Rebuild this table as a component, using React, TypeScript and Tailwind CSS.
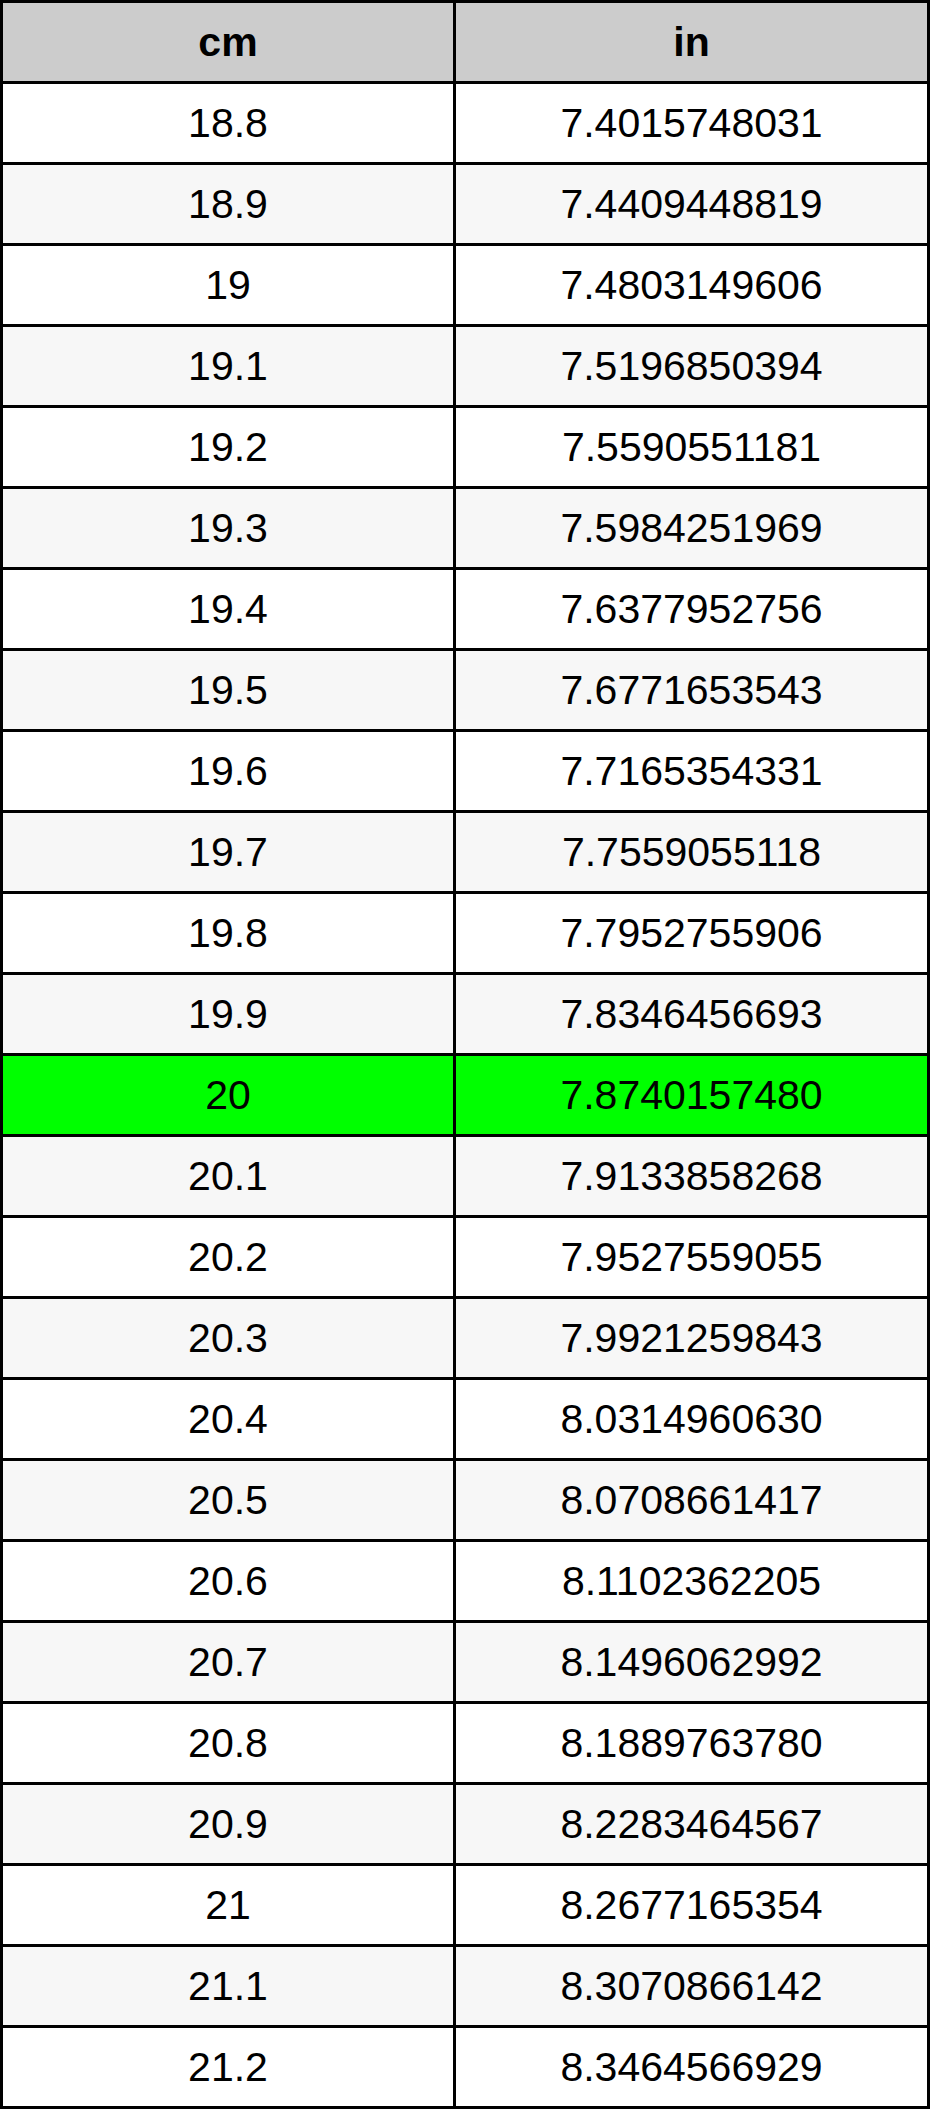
const rows: [string, string][] = [
  ["18.8", "7.4015748031"],
  ["18.9", "7.4409448819"],
  ["19", "7.4803149606"],
  ["19.1", "7.5196850394"],
  ["19.2", "7.5590551181"],
  ["19.3", "7.5984251969"],
  ["19.4", "7.6377952756"],
  ["19.5", "7.6771653543"],
  ["19.6", "7.7165354331"],
  ["19.7", "7.7559055118"],
  ["19.8", "7.7952755906"],
  ["19.9", "7.8346456693"],
  ["20", "7.8740157480"],
  ["20.1", "7.9133858268"],
  ["20.2", "7.9527559055"],
  ["20.3", "7.9921259843"],
  ["20.4", "8.0314960630"],
  ["20.5", "8.0708661417"],
  ["20.6", "8.1102362205"],
  ["20.7", "8.1496062992"],
  ["20.8", "8.1889763780"],
  ["20.9", "8.2283464567"],
  ["21", "8.2677165354"],
  ["21.1", "8.3070866142"],
  ["21.2", "8.3464566929"],
];

const Row = ({
  cells,
  className,
}: {
  cells: [string, string];
  className: string;
}) => (
  <div className={`flex flex-1 ${className}`}>
    <div className="flex w-[453px] items-center justify-center border-r-[3px] border-b-[3px] border-black">
      {cells[0]}
    </div>
    <div className="flex flex-1 items-center justify-center border-r-[3px] border-b-[3px] border-black">
      {cells[1]}
    </div>
  </div>
);

const App = () => {
  return (
    <div className="flex h-[2109px] w-[930px] flex-col border-t-[3px] border-l-[3px] border-black bg-white font-['Liberation_Sans',Arial,sans-serif] text-[41px] leading-none text-black">
      <Row cells={["cm", "in"]} className="bg-[#cccccc] font-bold" />
      {rows.map((r, i) => {
        let bg = i % 2 === 0 ? "bg-white" : "bg-[#f7f7f7]";
        if (r[0] === "20") bg = "bg-[#00ff00]";
        return <Row key={r[0]} cells={r} className={bg} />;
      })}
    </div>
  );
};

export default App;
